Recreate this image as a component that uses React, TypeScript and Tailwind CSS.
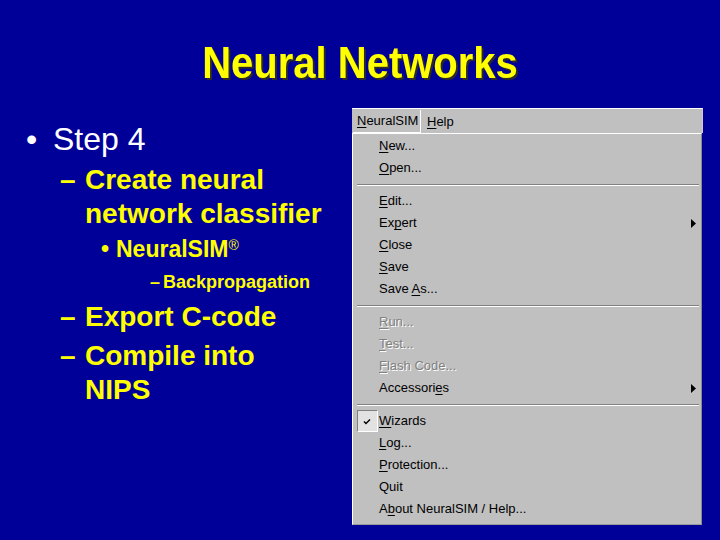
import type { ReactNode } from "react";

type Entry =
  | { kind: "item"; label: string; key?: number; disabled?: boolean; arrow?: boolean; checked?: boolean }
  | { kind: "sep" };

const entries: Entry[] = [
  { kind: "item", label: "New...", key: 0 },
  { kind: "item", label: "Open...", key: 0 },
  { kind: "sep" },
  { kind: "item", label: "Edit...", key: 0 },
  { kind: "item", label: "Expert", key: 2, arrow: true },
  { kind: "item", label: "Close", key: 0 },
  { kind: "item", label: "Save", key: 0 },
  { kind: "item", label: "Save As...", key: 5 },
  { kind: "sep" },
  { kind: "item", label: "Run...", key: 0, disabled: true },
  { kind: "item", label: "Test...", key: 0, disabled: true },
  { kind: "item", label: "Flash Code...", key: 0, disabled: true },
  { kind: "item", label: "Accessories", key: 9, arrow: true },
  { kind: "sep" },
  { kind: "item", label: "Wizards", key: 0, checked: true },
  { kind: "item", label: "Log...", key: 0 },
  { kind: "item", label: "Protection...", key: 0 },
  { kind: "item", label: "Quit" },
  { kind: "item", label: "About NeuralSIM / Help...", key: 1 },
];

function Mnemonic({ label, at }: { label: string; at?: number }) {
  if (at === undefined) return <>{label}</>;
  return (
    <>
      {label.slice(0, at)}
      <u className="underline-offset-2">{label[at]}</u>
      {label.slice(at + 1)}
    </>
  );
}

function Marker({ width, children }: { width: string; children: ReactNode }) {
  return <span className={`${width} shrink-0`}>{children}</span>;
}

function Menu() {
  return (
    <div className="w-[351px] font-['Liberation_Sans',Arial,sans-serif] text-[13px] text-black">
      <div className="flex h-[25px] items-stretch border-t border-r border-t-white border-r-[#d8c4cc] bg-[#c0c0c0] pt-[1px]">
        <div className="ml-[1px] flex w-[68px] items-center border-r border-b border-white pl-[4px]">
          <Mnemonic label="NeuralSIM" at={0} />
        </div>
        <div className="flex items-center pl-[6px]">
          <Mnemonic label="Help" at={0} />
        </div>
      </div>
      <div className="mr-[1px] border-t border-l border-r border-b border-t-white border-l-white border-r-[#8a8a8a] border-b-[#9a9a9a] bg-[#c0c0c0] pt-[1px] pb-[4px]">
        {entries.map((e, i) =>
          e.kind === "sep" ? (
            <div key={i} className="flex h-[11px] items-center pl-[4px] pr-[2px]">
              <div className="h-[2px] w-full border-t border-b border-t-[#808080] border-b-white" />
            </div>
          ) : (
            <div key={i} className="flex h-[22px] items-center">
              <div className="flex w-[26px] justify-center pl-[2px]">
                {e.checked ? (
                  <div className="flex h-[22px] w-[21px] items-center justify-center border border-t-[#808080] border-l-[#808080] border-r-white border-b-white bg-[#e2e2e2]">
                    <svg width="8" height="7" viewBox="0 0 8 7">
                      <path d="M1 3.5 L3 5.5 L7 1.5" fill="none" stroke="#000" strokeWidth="1.4" />
                    </svg>
                  </div>
                ) : null}
              </div>
              <span
                className={
                  e.disabled
                    ? "text-[#808080] [text-shadow:1px_1px_0_#ffffff]"
                    : ""
                }
              >
                <Mnemonic label={e.label} at={e.key} />
              </span>
              {e.arrow ? (
                <svg className="ml-auto mr-[5px]" width="5" height="9" viewBox="0 0 5 9">
                  <path d="M0 0 L5 4.5 L0 9 Z" fill="#000" />
                </svg>
              ) : null}
            </div>
          )
        )}
      </div>
    </div>
  );
}

export default function App() {
  return (
    <div className="flex h-[540px] w-[720px] flex-col overflow-hidden bg-[#000099] font-['Liberation_Sans',Arial,sans-serif]">
      <div className="h-[108px] pt-[41px] text-center">
        <h1 className="inline-block origin-bottom scale-y-110 text-[40px] leading-[48px] font-bold text-[#ffff00] [text-shadow:2px_2px_0_#2a2a2a]">
          Neural Networks
        </h1>
      </div>
      <div className="flex">
        <div className="w-[352px] pt-[11px]">
          <div className="flex pl-[26px] text-[32px] leading-[40px] text-white">
            <Marker width="w-[27px]">•</Marker>
            <span>Step 4</span>
          </div>
          <div className="mt-[4px] flex pl-[60px] text-[28px] leading-[34px] font-bold text-[#ffff00]">
            <Marker width="w-[25px]">–</Marker>
            <span>
              Create neural
              <br />
              network classifier
            </span>
          </div>
          <div className="mt-[3px] flex pl-[101px] text-[23px] leading-[30px] font-bold text-[#ffff00]">
            <Marker width="w-[15px]">•</Marker>
            <span>
              NeuralSIM<sup className="text-[14px] font-normal">®</sup>
            </span>
          </div>
          <div className="mt-[6px] flex pl-[150px] text-[18px] leading-[24px] font-bold text-[#ffff00]">
            <Marker width="w-[13px]">–</Marker>
            <span>Backpropagation</span>
          </div>
          <div className="mt-[6px] flex pl-[60px] text-[28px] leading-[34px] font-bold text-[#ffff00]">
            <Marker width="w-[25px]">–</Marker>
            <span>Export C-code</span>
          </div>
          <div className="mt-[5px] flex pl-[60px] text-[28px] leading-[34px] font-bold text-[#ffff00]">
            <Marker width="w-[25px]">–</Marker>
            <span>
              Compile into
              <br />
              NIPS
            </span>
          </div>
        </div>
        <Menu />
      </div>
    </div>
  );
}
